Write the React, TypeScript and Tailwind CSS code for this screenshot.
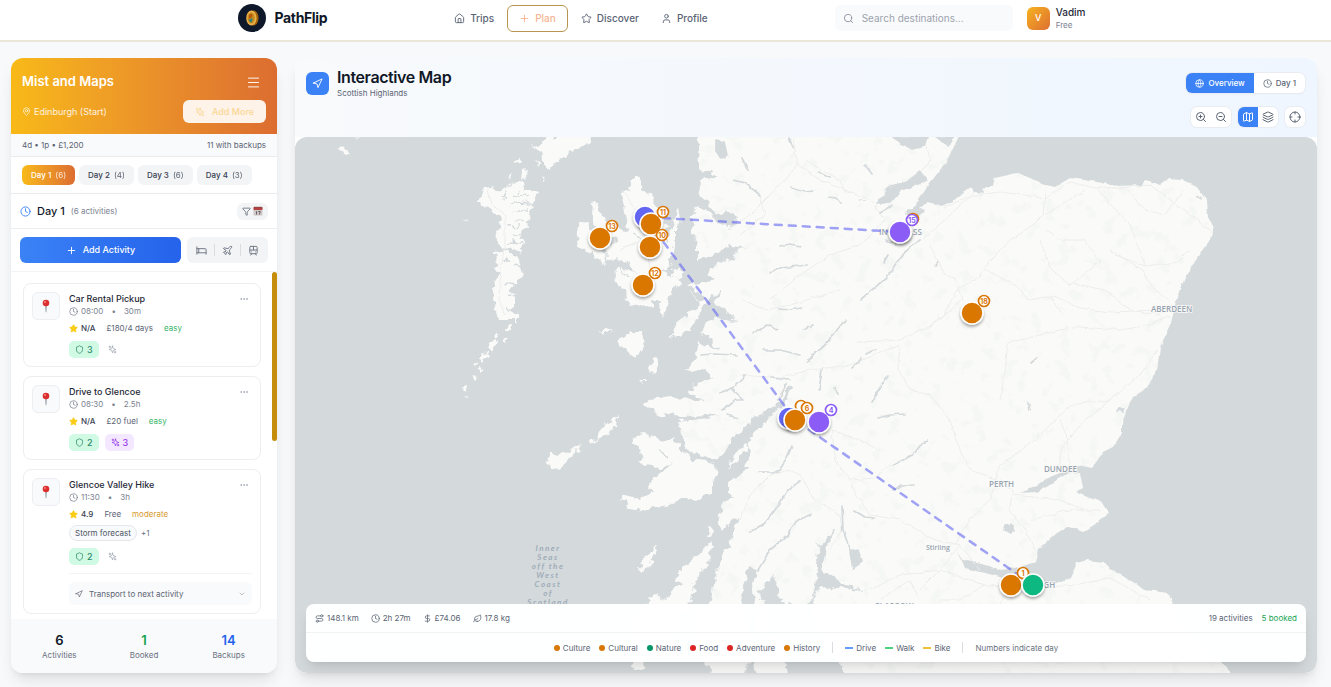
import type { ReactNode } from 'react'
import {
  House, Plus, Star, User, Search, Menu, MapPin, Clock, Bed, Plane, TramFront, Ellipsis,
  Shield, Navigation, ChevronDown, Globe, ZoomIn, ZoomOut, Map as MapIcon, Layers, Crosshair,
  Route, DollarSign, Leaf, Funnel,
} from 'lucide-react'

type Activity = {
  title: string
  time: string
  length: string
  rating: string
  price: string
  level: 'easy' | 'moderate'
  backups: number
  ideas?: number
  chip?: string
  transport?: boolean
}

const activities: Activity[] = [
  { title: 'Car Rental Pickup', time: '08:00', length: '30m', rating: 'N/A', price: '£180/4 days', level: 'easy', backups: 3 },
  { title: 'Drive to Glencoe', time: '08:30', length: '2.5h', rating: 'N/A', price: '£20 fuel', level: 'easy', backups: 2, ideas: 3 },
  { title: 'Glencoe Valley Hike', time: '11:30', length: '3h', rating: '4.9', price: 'Free', level: 'moderate', backups: 2, chip: 'Storm forecast', transport: true },
]

const days = [
  { name: 'Day 1', count: 6 },
  { name: 'Day 2', count: 4 },
  { name: 'Day 3', count: 6 },
  { name: 'Day 4', count: 3 },
]

const categories = [
  { name: 'Culture', color: 'bg-[#d97706]' },
  { name: 'Cultural', color: 'bg-[#d97706]' },
  { name: 'Nature', color: 'bg-[#059669]' },
  { name: 'Food', color: 'bg-[#dc2626]' },
  { name: 'Adventure', color: 'bg-[#dc2626]' },
  { name: 'History', color: 'bg-[#d97706]' },
]

const modes = [
  { name: 'Drive', color: 'bg-[#3b82f6]/80' },
  { name: 'Walk', color: 'bg-[#22c55e]/80' },
  { name: 'Bike', color: 'bg-[#eab308]/80' },
]

function Sparkles({ size, className }: { size: number; className?: string }) {
  return (
    <svg width={size} height={size} viewBox="0 0 24 24" fill="none" stroke="currentColor" strokeWidth="2" strokeLinecap="round" strokeLinejoin="round" className={className}>
      <path d="m12 3-1.912 5.813a2 2 0 0 1-1.275 1.275L3 12l5.813 1.912a2 2 0 0 1 1.275 1.275L12 21l1.912-5.813a2 2 0 0 1 1.275-1.275L21 12l-5.813-1.912a2 2 0 0 1-1.275-1.275L12 3Z" />
      <path d="M5 3v4M19 17v4M3 5h4M17 19h4" />
    </svg>
  )
}

function Logo() {
  return (
    <svg width="28" height="28" viewBox="0 0 28 28">
      <circle cx="14" cy="14" r="14" fill="#0f172a" />
      <ellipse cx="15.6" cy="14" rx="5" ry="7.4" fill="#a16207" />
      <ellipse cx="13.4" cy="14" rx="5.2" ry="7.6" fill="#eab04a" />
      <ellipse cx="13.2" cy="14" rx="3.6" ry="5.6" fill="#c98a1d" />
      <path d="M11 11.5c.8-1.6 2.6-2 3.6-1l-1.2 3.3-2.2.8z" fill="#b45309" />
      <path d="M10.6 15.2c1.4.6 2.8 0 3.4-1.6.8 1.4.6 3.6-.6 4.8-1.4-.2-2.5-1.400-2.800-3.200z" fill="#2f7f79" />
    </svg>
  )
}

function Pin() {
  return (
    <svg width="10" height="14" viewBox="0 0 10 14">
      <path d="M4.300 6h1.400l-.4 7.200h-.6z" fill="#7b8794" />
      <circle cx="5" cy="4" r="3.300" fill="#dc2f2f" />
      <circle cx="4" cy="3" r="1" fill="#f58a80" />
    </svg>
  )
}

function CalendarGlyph() {
  return (
    <svg width="10" height="10" viewBox="0 0 20 20">
      <rect x="1" y="2" width="18" height="17" rx="1.500" fill="#cfc6c6" />
      <rect x="1" y="2" width="18" height="6" rx="1.500" fill="#b4433f" />
      <path d="M4 1v3M8 1v3M12 1v3M16 1v3" stroke="#6b4a4a" strokeWidth="1.500" />
      <path d="M7 10.500v6.500M10.500 11h4l-2 6" stroke="#5b5560" strokeWidth="1.800" fill="none" />
    </svg>
  )
}

function Header() {
  return (
    <header className="border-b-2 border-[#ece6d8] bg-white">
      <div className="mx-auto flex h-10 max-w-[856px] items-center justify-between pb-1">
        <a href="#" className="flex items-center gap-[9px] text-sm font-bold tracking-tight text-[#101828]">
          <Logo />
          PathFlip
        </a>
        <nav className="flex items-center gap-1 text-[10px] font-medium text-[#5b6474]">
          <a href="#" className="flex h-[27px] items-center gap-[5px] px-[9px]"><House size={11} />Trips</a>
          <a href="#" className="flex h-[27px] items-center gap-[5px] rounded-md border border-[#b8954f] px-[11px] text-[#f6b592]"><Plus size={11} />Plan</a>
          <a href="#" className="flex h-[27px] items-center gap-[5px] px-[9px]"><Star size={11} />Discover</a>
          <a href="#" className="flex h-[27px] items-center gap-[5px] px-[9px]"><User size={11} />Profile</a>
        </nav>
        <div className="flex items-center gap-[14px]">
          <label className="flex h-[26px] w-[178px] items-center gap-2 rounded-md bg-[#f9fafb] px-2 text-[#8b93a1]">
            <Search size={11} className="shrink-0" />
            <input
              type="search"
              aria-label="Search destinations"
              placeholder="Search destinations..."
              className="w-full bg-transparent text-[10px] outline-none placeholder:text-[#9ca3af]"
            />
          </label>
          <button className="flex items-center gap-[6px] pr-2 text-left">
            <span className="flex size-[23px] items-center justify-center rounded-md bg-gradient-to-br from-[#f6b21b] to-[#dd6e2f] text-[9px] font-medium text-white">V</span>
            <span className="flex flex-col">
              <span className="text-[10px] leading-[13px] font-medium text-[#1f2937]">Vadim</span>
              <span className="text-[8px] leading-3 text-[#7b8290]">Free</span>
            </span>
          </button>
        </div>
      </div>
    </header>
  )
}

function ActivityCard({ item }: { item: Activity }) {
  return (
    <article className="flex gap-[9px] rounded-lg border border-[#eceef1] bg-white p-2">
      <div className="flex size-7 shrink-0 items-center justify-center rounded-md border border-[#eceef1] bg-[#f9fafb]">
        <Pin />
      </div>
      <div className="min-w-0 flex-1">
        <div className="flex h-[13px] items-center justify-between">
          <h3 className="text-[9px] font-medium text-[#1f2937]">{item.title}</h3>
          <button aria-label={`More options for ${item.title}`} className="mr-[3px] text-[#9ca3af]"><Ellipsis size={10} /></button>
        </div>
        <p className="flex h-3 items-center text-[8px] text-[#7b8290]">
          <Clock size={9} className="mr-[3px]" />
          {item.time}
          <span className="mx-2">•</span>
          {item.length}
        </p>
        <p className="mt-[5px] flex h-3 items-center gap-[11px] text-[8px] text-[#5b6474]">
          <span className="flex items-center gap-[3px] font-medium text-[#374151]">
            <Star size={9} className="fill-[#facc15] text-[#facc15]" />
            {item.rating}
          </span>
          <span>{item.price}</span>
          <span className={item.level === 'easy' ? 'text-[#38b566]' : 'text-[#d69a2d]'}>{item.level}</span>
        </p>
        {item.chip && (
          <p className="mt-1 flex h-[17px] items-center gap-1 text-[8px] text-[#6b7280]">
            <span className="rounded-full border border-[#e5e7eb] bg-[#f9fafb] px-[5px] leading-[14px] text-[#4b5563]">{item.chip}</span>
            +1
          </p>
        )}
        <div className="mt-[7px] flex items-center gap-[6px] text-[9px] font-medium">
          <button aria-label="Backup plans" className="flex h-[17px] items-center gap-[3px] rounded-[5px] bg-[#d1fae5] px-[6px] text-[#2d8a6a]">
            <Shield size={9} />{item.backups}
          </button>
          <button
            aria-label="Suggestions"
            className={`flex h-[17px] items-center gap-[3px] rounded-[5px] ${item.ideas ? 'bg-[#f3e8ff] px-[6px] text-[#9333ea]' : 'px-[3px] text-[#9ca3af]'}`}
          >
            <Sparkles size={9} />{item.ideas}
          </button>
        </div>
        {item.transport && (
          <div className="mt-2 border-t border-[#f3f4f6] pt-2">
            <button className="flex h-[23px] w-full items-center gap-[6px] rounded-md bg-[#f9fafb] px-[6px] text-[8px] text-[#5b6474]">
              <Navigation size={8} />
              Transport to next activity
              <ChevronDown size={8} className="ml-auto text-[#9ca3af]" />
            </button>
          </div>
        )}
      </div>
    </article>
  )
}

function Total({ value, label, color }: { value: number; label: string; color: string }) {
  return (
    <div className="flex flex-col items-center">
      <span className={`text-[13px] leading-[18px] font-semibold ${color}`}>{value}</span>
      <span className="text-[8px] leading-3 text-[#6b7280]">{label}</span>
    </div>
  )
}

function Sidebar() {
  return (
    <aside className="flex w-[266px] shrink-0 flex-col overflow-hidden rounded-xl bg-white shadow-lg">
      <div className="bg-gradient-to-r from-[#f8b917] to-[#dc6d30] px-[11px] pt-[14px] pb-[11px] text-white">
        <div className="flex h-5 items-center justify-between pr-[5px]">
          <h1 className="text-[13px] font-semibold">Mist and Maps</h1>
          <button aria-label="Trip menu"><Menu size={15} strokeWidth={1.5} /></button>
        </div>
        <div className="mt-2 flex h-[23px] items-center justify-between">
          <p className="flex items-center gap-[3px] text-[9px] text-white/85"><MapPin size={9} />Edinburgh (Start)</p>
          <button className="flex h-[23px] items-center gap-[7px] rounded-md bg-[#fdf3e9] px-3 text-[9px] font-medium text-[#fbd794]">
            <Sparkles size={10} />Add More
          </button>
        </div>
      </div>

      <div className="flex h-[23px] items-center justify-between border-b border-[#e9ebee] bg-[#f9fafb] px-[11px] text-[8px] text-[#5b6474]">
        <span>4d • 1p • £1,200</span>
        <span>11 with backups</span>
      </div>

      <div className="flex h-[37px] items-center gap-1 border-b border-[#e9ebee] px-[11px]">
        {days.map((day, i) => (
          <button
            key={day.name}
            className={`flex h-5 items-center gap-1 rounded-md px-[9px] text-[8px] font-medium ${i === 0 ? 'bg-gradient-to-r from-[#f8b917] to-[#dc6d30] text-white' : 'bg-[#f3f4f6] text-[#374151]'}`}
          >
            {day.name} <span className="font-normal opacity-80">({day.count})</span>
          </button>
        ))}
      </div>

      <div className="flex h-[35px] items-center gap-[6px] rounded-t-lg border-b border-[#eceef1] px-[9px]">
        <Clock size={11} className="text-[#3b82f6]" />
        <h2 className="text-[11px] font-medium text-[#111827]">Day 1</h2>
        <span className="text-[8px] text-[#7b8290]">(6 activities)</span>
        <button aria-label="Filter by date" className="ml-auto flex h-[17px] items-center gap-[2px] rounded-md bg-[#f3f4f6] px-[5px] text-[#5b6474]">
          <Funnel size={9} /><CalendarGlyph />
        </button>
      </div>

      <div className="flex h-[43px] items-center gap-[6px] border-b border-[#f3f4f6] px-[9px]">
        <button className="flex h-[26px] flex-1 items-center justify-center gap-[6px] rounded-md bg-gradient-to-r from-[#3b82f6] to-[#2563eb] text-[9px] font-medium text-white">
          <Plus size={11} />Add Activity
        </button>
        <div className="flex h-[26px] items-center gap-[7px] rounded-md bg-[#f3f4f6] px-[9px] text-[#6b7280]">
          <button aria-label="Add stay"><Bed size={11} /></button>
          <span className="h-3 w-px bg-[#d9dce1]" />
          <button aria-label="Add flight"><Plane size={11} /></button>
          <span className="h-3 w-px bg-[#d9dce1]" />
          <button aria-label="Add transit"><TramFront size={11} /></button>
        </div>
      </div>

      <div className="flex flex-1">
        <div className="flex flex-1 flex-col gap-[9px] pt-[11px] pb-1 pr-[11px] pl-[12px]">
          {activities.map(item => <ActivityCard key={item.title} item={item} />)}
        </div>
        <div className="h-[169px] w-[5px] rounded-full bg-[#c68d0c]" />
      </div>

      <footer className="grid h-[54px] grid-cols-3 items-center bg-[#f8fafc] px-[6px]">
        <Total value={6} label="Activities" color="text-[#111827]" />
        <Total value={1} label="Booked" color="text-[#16a34a]" />
        <Total value={14} label="Backups" color="text-[#2563eb]" />
      </footer>
    </aside>
  )
}

/* Land masses, drawn in the map's own 1022x536 window (origin 295,137). */
const mainland =
  'M698 130 698 145 699 169 707 171 713 172 716 178 703 178 698 192 707 200 710 208 720 215 727 212 737 216 735 223 727 228 719 225 713 217 705 211 697 207 693 215 692 230 697 245 697 262 707 258 723 250 728 245 743 246 733 258 717 263 708 275 716 280 703 281 687 285 696 291 705 297 700 304 690 312 677 322 671 336 676 338 688 330 697 318 703 308 710 298 718 292 722 287 715 303 723 309 730 314 737 322 724 320 715 317 706 323 702 332 710 337 713 345 720 349 709 348 697 342 696 357 685 370 693 372 703 368 713 377 703 383 693 385 690 393 703 400 694 402 686 396 679 399 671 395 662 399 655 396 645 404 652 411 660 416 670 413 680 418 694 415 705 414 720 416 700 419 678 422 681 433 687 452 701 455 715 460 725 452 733 437 745 427 757 415 767 412 776 405 783 397 790 385 793 387 787 400 770 417 760 428 753 435 748 443 752 453 747 460 748 468 738 477 728 483 728 493 735 497 722 503 720 523 723 532 733 520 738 516 728 547 720 562 715 577 713 593 712 600 700 607 690 630 700 650 712 680 742 680 755 650 745 620 741 600 746 575 747 565 757 570 753 590 754 604 760 640 770 620 764 602 757 593 778 570 780 555 775 580 783 603 800 610 812 600 817 575 815 560 820 548 832 532 826 550 822 570 832 575 840 582 865 590 840 588 818 586 812 605 820 640 838 660 848 680 1234 680 1228 668 1200 645 1180 620 1173 603 1167 593 1155 591 1143 590 1133 582 1117 573 1103 562 1087 560 1077 563 1070 578 1053 584 1035 582 1000 577 985 573 965 568 962 561 957 551 963 560 978 563 1002 570 1020 567 1035 562 1038 550 1057 533 1067 527 1075 528 1082 532 1095 525 1109 512 1103 503 1082 495 1075 492 1083 488 1080 473 1065 475 1050 484 1037 492 1020 493 1035 487 1045 479 1060 473 1078 465 1092 468 1103 452 1113 447 1122 433 1122 423 1128 407 1133 397 1147 388 1157 370 1160 348 1170 327 1177 297 1187 273 1200 253 1210 240 1213 227 1208 217 1207 200 1195 185 1183 180 1168 179 1160 185 1147 180 1142 185 1118 186 1097 182 1070 178 1055 187 1042 184 1030 178 1017 173 995 178 993 185 983 188 967 189 952 202 942 206 926 203 918 210 910 214 916 203 924 192 930 183 940 170 950 155 958 138 962 130Z'

const islands = [
  // Harris
  'M532 145 538 146 548 137 600 130 583 147 576 149 573 154 567 150 566 157 558 158 550 170 545 163 540 154Z',
  // North Uist and Benbecula
  'M485 188 493 187 500 192 507 186 513 184 520 180 527 185 523 190 537 190 540 192 535 200 531 208 530 216 527 221 528 228 520 233 524 240 520 252 510 248 503 247 497 243 496 232 502 227 499 216 490 210 478 202Z',
  // South Uist
  'M495 252 507 250 516 257 520 264 522 277 516 284 511 291 515 297 515 307 509 311 518 315 518 320 500 320 495 310 493 287 498 270Z',
  // Barra and its neighbours
  'M508 324 512 323 511 331 507 331Z M490 341 497 338 498 345 493 351 488 349Z M480 352 486 353 489 358 482 363Z M465 385 468 384 467 390 463 391Z M497 331 500 334 495 336Z M475 361 478 362 477 366Z',
  'M513 160 520 157 521 162 515 164Z M522 172 528 170 527 177 521 179Z M536 160 539 163 537 170Z M339 147 347 148 350 155 343 153Z M462 221 469 219 470 222Z',
  'M504 338 508 337 506 342Z M480 368 483 370 480 373Z M463 394 468 395 465 397Z M509 177 513 175 512 181Z M543 176 546 178 543 181Z M472 376 477 377 474 380Z M356 136 359 138 357 140Z',
  // Skye
  'M632 178 638 178 642 188 650 193 655 205 660 216 668 226 664 232 668 242 666 252 672 266 662 270 668 275 678 280 681 285 673 288 668 303 662 319 659 310 660 300 652 300 654 308 640 304 629 306 625 291 616 284 614 270 624 268 634 272 640 280 628 262 610 258 611 246 616 240 610 236 612 258 604 264 596 258 586 250 576 242 578 226 584 222 592 233 597 230 592 216 593 202 600 210 606 222 618 230 628 231 624 206 621 193 630 188Z',
  // Raasay and Scalpay
  'M678 208 681 214 678 226 673 232 673 245 669 262 664 250 668 240Z M672 270 680 268 685 275 678 280 672 276Z',
  // Rum, Canna, Eigg, Muck
  'M617 342 625 335 634 331 644 336 643 350 635 358 628 352Z M598 331 606 328 614 331 604 334Z M651 363 658 357 660 367 654 374 648 370Z M640 381 647 381 643 384Z',
  // Coll and Tiree
  'M617 416 616 424 609 433 601 439 595 438 600 430 607 423Z M583 447 575 452 569 460 562 466 553 469 549 464 550 454 560 455 569 450 579 446Z M591 440 598 439 590 445Z',
  // Mull
  'M634 438 643 434 655 438 668 442 674 437 682 451 690 459 703 461 716 465 718 476 712 480 712 492 695 503 690 500 693 495 680 500 664 506 646 510 636 512 625 507 627 499 620 501 623 495 640 498 655 492 648 489 650 482 660 473 673 463 660 467 637 464 645 458 632 443Z',
  // Lismore and the small slate islands
  'M745 445 749 447 739 459 727 467 732 457Z M722 506 725 510 721 530 718 525Z M710 528 714 530 711 538 707 536Z',
  // Jura and Islay
  'M711 542 714 545 708 562 697 578 685 584 675 580 680 570 695 556Z M657 545 655 556 646 570 641 572 642 560Z M663 600 678 586 695 580 692 600 680 618 675 640 665 655 645 660 632 668 635 645 628 640 635 620 645 605 655 593Z M632 660 645 662 643 670 634 670Z',
  // Arran
  'M753 662 762 640 775 635 785 655 786 668 789 680 757 680Z',
]

// Sea lochs and inlets cut into the Uists and Skye
const inlets =
  'M528 196 520 197 514 195M530 204 516 203 510 205M528 211 518 212 512 210M540 200 533 205 525 201M525 218 515 220M520 227 509 228M527 234 513 235M510 242 522 243M504 191 507 197 502 199M520 188 518 193M520 256 511 254M522 268 514 266M517 285 506 284M515 296 508 295M517 310 505 309M505 257 509 262M605 250 607 262M640 240 634 232M618 268 630 276'

const lochs = [
  'M920 240 905 252 887 277 860 300M845 320 825 345 807 361M787 384 778 400',
  'M721 146 725 158M742 158 748 170M733 180 745 183 760 195M792 188 805 192 813 191M789 138 793 147M818 172 830 178M828 197 836 198 840 203',
  'M780 246 790 244 801 246M770 272 780 268 807 265M779 309 790 310 801 308M752 334 767 325 778 329M803 329 813 325M763 350 780 350 800 355M770 378 790 380M700 355 715 354 737 355M745 376 735 386 720 393',
  'M730 388 743 400 735 400 722 410M838 394 834 388M822 370 819 390M883 382 877 395 872 402M878 418 890 415 904 414M893 465 905 459 914 454 922 443 928 441M894 489 903 486 914 485',
  'M792 446 786 460 778 472 760 472M800 481 788 490 775 510 765 523 750 532M812 514 797 520 788 535 770 550 758 570M842 506 843 530 850 550 855 560M835 530 822 548 816 543M855 511 865 517 874 518M738 418 728 415M668 458 660 450M900 485 893 490',
  'M860 200 865 201M865 165 872 174M880 204 890 186 905 183 922 180M892 206 880 213M886 240 896 244M895 235 902 234M888 255 884 262M867 354 875 350M1011 525 1014 531M1031 363 1037 358M888 376 875 395M852 368 862 358M1122 409 1117 411M1028 402 1030 409M1196 196 1202 199M935 265 938 262',
]

const roads = [
  'M945 207 970 196 1000 192 1045 198 1070 182 1095 188 1118 188 1150 185 1190 215 1212 232',
  'M922 240 950 215 975 192M930 245 945 275 955 278 962 300 940 320 900 340 857 342',
  'M1045 190 1043 215 1033 225 1010 240 995 255 980 275 955 292 945 315 925 330',
  'M1045 215 1085 190M1045 228 1060 240 1085 240 1100 262 1070 285 1050 268 1040 240M1110 250 1140 268 1155 290 1170 300M1098 190 1120 215 1130 225 1145 265',
  'M1183 190 1165 215 1145 210 1125 188M1190 250 1178 262 1145 266 1115 255M1073 283 1105 290 1130 310 1160 315M1052 295 1080 308 1110 312 1160 310 1172 305',
  'M985 270 1015 285 1030 300 1050 296 1060 312M1170 315 1150 325 1120 330 1080 327 1060 330 1008 343 1005 370 1000 400',
  'M1158 350 1140 375 1110 400 1070 405 1035 440 1000 465 990 500 970 520 955 545M1110 400 1080 425 1060 450 1060 470M1060 420 1068 440 1070 465',
  'M950 420 958 445 970 470 1000 480 1012 490 1010 510 1025 530 1035 550M1012 495 1060 500 1085 510M1030 520 1070 510 1100 510',
  'M900 345 898 370 910 390 930 395 950 420M832 430 835 460 850 480 875 478 890 465M832 430 860 440 880 450',
  'M800 475 790 470 770 475 750 495 740 520M800 475 815 500 840 515 842 530 830 550M850 485 870 515 900 520 935 540 960 545 980 570',
  'M870 590 900 575 940 570 985 585 1035 588 1075 585 1110 578 1150 600M880 600 910 580 920 600M960 545 940 570 920 590M985 585 960 600 940 600M1010 588 1000 604',
  'M793 138 798 165 820 180 845 190 870 200 885 220 860 245 830 255 800 275 770 300M798 165 770 195 750 215 730 228M760 195 765 215 740 235',
  'M805 160 840 180 845 192M743 300 765 310 790 305 840 290M700 305 690 290M810 370 850 365 900 345M740 375 780 378 810 370',
  'M925 138 930 160 915 180 885 190 875 210M622 190 640 215 645 240 650 268M640 240 620 250',
  'M488 190 492 205 505 215 505 240 501 270 499 300 505 315',
]

type Marker = { x: number; y: number; color: string; label?: string }

const markers: Marker[] = [
  { x: 645, y: 217, color: '#6366f1' },
  { x: 651, y: 224, color: '#d97706', label: '11' },
  { x: 650, y: 247, color: '#d97706', label: '10' },
  { x: 600, y: 238, color: '#d97706', label: '13' },
  { x: 643, y: 285, color: '#d97706', label: '12' },
  { x: 901, y: 231, color: '#d97706', label: '' },
  { x: 900, y: 232, color: '#8b5cf6', label: '15' },
  { x: 972, y: 313, color: '#d97706', label: '18' },
  { x: 789, y: 418, color: '#6366f1', label: '' },
  { x: 795, y: 420, color: '#d97706', label: '6' },
  { x: 819, y: 422, color: '#8b5cf6', label: '4' },
  { x: 1011, y: 585, color: '#d97706', label: '1' },
  { x: 1033, y: 585, color: '#10b981' },
]

function MapCanvas() {
  return (
    <svg className="absolute inset-0 h-full w-full" viewBox="295 137 1022 536" preserveAspectRatio="xMidYMid slice" role="img" aria-label="Map of the Scottish Highlands">
      <defs>
        <filter id="coast" x="295" y="137" width="1022" height="536" filterUnits="userSpaceOnUse">
          <feTurbulence type="fractalNoise" baseFrequency="0.140" numOctaves="2" seed="4" />
          <feDisplacementMap in="SourceGraphic" scale="10" xChannelSelector="R" yChannelSelector="G" />
        </filter>
        <filter id="east" x="295" y="137" width="1022" height="536" filterUnits="userSpaceOnUse">
          <feTurbulence type="fractalNoise" baseFrequency="0.120" numOctaves="2" seed="9" />
          <feDisplacementMap in="SourceGraphic" scale="4" xChannelSelector="R" yChannelSelector="G" />
        </filter>
        <filter id="woods" x="295" y="137" width="1022" height="536" filterUnits="userSpaceOnUse" colorInterpolationFilters="sRGB">
          <feTurbulence type="fractalNoise" baseFrequency="0.070" numOctaves="4" seed="21" />
          <feColorMatrix values="0 0 0 0 0.960  0 0 0 0 0.969  0 0 0 0 0.961  8 0 0 0 -4.700" />
        </filter>
        <filter id="pin" x="-50%" y="-50%" width="200%" height="200%">
          <feDropShadow dx="0" dy="2" stdDeviation="1.500" floodOpacity="0.350" />
        </filter>
        <clipPath id="land">
          <path d={mainland} />
        </clipPath>
        <clipPath id="westHalf">
          <rect x="295" y="137" width="585" height="536" />
        </clipPath>
        <clipPath id="eastHalf">
          <rect x="879" y="137" width="438" height="536" />
        </clipPath>
      </defs>
      <rect x="295" y="137" width="1022" height="536" fill="#d4d9dc" />
      <g fill="#fafaf8">
        <g clipPath="url(#westHalf)">
          <path d={mainland} filter="url(#coast)" />
        </g>
        <g clipPath="url(#eastHalf)">
          <path d={mainland} filter="url(#east)" />
        </g>
        <g filter="url(#coast)">
          {islands.map(d => <path key={d} d={d} />)}
          <path d={inlets} fill="none" stroke="#d4d9dc" strokeWidth="1.300" />
        </g>
      </g>
      <g clipPath="url(#land)">
        <rect x="740" y="137" width="480" height="536" filter="url(#woods)" />
      </g>
      <g fill="none" stroke="#ededed" strokeWidth="1" strokeLinejoin="round" filter="url(#east)">
        {roads.map(d => <path key={d} d={d} />)}
      </g>
      <g fill="none" stroke="#d4d9dc" strokeWidth="1.700" strokeLinecap="round" strokeLinejoin="round" filter="url(#east)">
        {lochs.map(d => <path key={d} d={d} />)}
        <path d="M877 204 890 188 907 182 920 172 928 180 913 186 900 190 890 202Z" fill="#d4d9dc" />
        <path d="M900 142 912 149 925 146 928 137 893 137Z M935 137 948 145 954 137Z" fill="#d4d9dc" />
        <path d="M850 552 858 550 862 562 853 568Z M1006 524 1013 528 1011 533 1005 530Z M1118 409 1124 409 1122 413Z" fill="#d4d9dc" />
        <path d="M970 187 980 185 983 192 974 191Z M908 210 924 210 918 216 907 214Z" fill="#d4d9dc" />
        <path d="M716 140 724 142 727 155 722 158 716 152Z" fill="#d4d9dc" />
      </g>

      <g fontFamily="'Open Sans', sans-serif" fontWeight="600" fill="#98a5b1" stroke="#fafaf8" strokeWidth="1.500" paintOrder="stroke" fontSize="8">
        <text x="1151" y="312">ABERDEEN</text>
        <text x="1044" y="472">DUNDEE</text>
        <text x="989" y="487">PERTH</text>
        <text x="879" y="235">INVERNESS</text>
        <text x="1008" y="588">EDINBURGH</text>
        <text x="926" y="550" fontSize="7">Stirling</text>
        <text x="874" y="609">GLASGOW</text>
      </g>
      <g fontFamily="Lato, sans-serif" fontStyle="italic" fontWeight="700" fontSize="8" letterSpacing="1.500" fill="#a0adb8" textAnchor="middle">
        {['Inner', 'Seas', 'off the', 'West', 'Coast', 'of', 'Scotland'].map((line, i) => (
          <text key={line} x="548" y={551 + i * 9}>{line}</text>
        ))}
      </g>

      <path
        d="M1033 585 795 420 645 217 900 232"
        fill="none"
        stroke="#6366f1"
        strokeOpacity="0.600"
        strokeWidth="2.500"
        strokeDasharray="7 7"
        strokeLinecap="round"
      />

      {markers.map(m => (
        <g key={`${m.x}-${m.y}`} fontFamily="Inter, sans-serif">
          <circle cx={m.x} cy={m.y} r="11" fill={m.color} stroke="#fff" strokeWidth="1.500" filter="url(#pin)" />
          {m.label !== undefined && (
            <>
              <circle cx={m.x + 12} cy={m.y - 12} r="5.500" fill="#fff" stroke={m.color === '#6366f1' ? '#d97706' : m.color} strokeWidth="1.700" />
              <text x={m.x + 12} y={m.y - 9.500} fontSize="7" fontWeight="700" textAnchor="middle" fill={m.color}>{m.label}</text>
            </>
          )}
        </g>
      ))}
    </svg>
  )
}

function Stat({ icon, children }: { icon: ReactNode; children: ReactNode }) {
  return <span className="flex items-center gap-[3px]">{icon}{children}</span>
}

function MapPanel() {
  return (
    <section className="flex min-w-0 flex-1 flex-col overflow-hidden rounded-xl bg-white shadow-lg">
      <div className="flex h-[79px] items-start justify-between bg-gradient-to-r from-[#f8fafc] to-[#eff6ff] pr-3 pl-[11px]">
        <div className="flex gap-2 pt-[10px]">
          <span className="mt-1 flex size-[23px] items-center justify-center rounded-md bg-[#3b82f6] text-white"><Navigation size={11} /></span>
          <div>
            <h2 className="text-base leading-[19px] font-semibold tracking-tight text-[#111827]">Interactive Map</h2>
            <p className="text-[8px] leading-3 text-[#5b6474]">Scottish Highlands</p>
          </div>
        </div>
        <div className="flex flex-col items-end gap-[14px] pt-[15px] text-[8px] font-medium text-[#5b6474]">
          <div className="flex overflow-hidden rounded-md bg-white shadow-xs ring-1 ring-[#e9edf2]">
            <button className="flex h-5 items-center gap-1 bg-[#3b82f6] px-[9px] text-white"><Globe size={9} />Overview</button>
            <button className="flex h-5 items-center gap-1 px-[9px]"><Clock size={9} />Day 1</button>
          </div>
          <div className="flex gap-[7px]">
            <div className="flex overflow-hidden rounded-md bg-white ring-1 ring-[#e9edf2]">
              <button aria-label="Zoom in" className="flex size-5 items-center justify-center"><ZoomIn size={12} /></button>
              <button aria-label="Zoom out" className="flex size-5 items-center justify-center"><ZoomOut size={12} /></button>
            </div>
            <div className="flex overflow-hidden rounded-md bg-white ring-1 ring-[#e9edf2]">
              <button aria-label="Street map" className="flex size-5 items-center justify-center bg-[#3b82f6] text-white"><MapIcon size={12} /></button>
              <button aria-label="Layers" className="flex size-5 items-center justify-center"><Layers size={12} /></button>
            </div>
            <button aria-label="Centre the map" className="flex size-5 items-center justify-center rounded-md bg-white ring-1 ring-[#e9edf2]"><Crosshair size={12} /></button>
          </div>
        </div>
      </div>

      <div className="relative flex-1 overflow-hidden rounded-xl">
        <MapCanvas />
        <div className="absolute inset-x-[11px] bottom-[11px] rounded-lg bg-white/98 text-[8px] text-[#5b6474] shadow-lg">
          <div className="flex h-[29px] items-center gap-3 border-b border-[#f1f2f4] px-[9px]">
            <Stat icon={<Route size={9} />}>148.1 km</Stat>
            <Stat icon={<Clock size={9} />}>2h 27m</Stat>
            <Stat icon={<DollarSign size={9} />}>£74.06</Stat>
            <Stat icon={<Leaf size={9} />}>17.8 kg</Stat>
            <div className="ml-auto flex gap-[9px]">
              <span>19 activities</span>
              <span className="text-[#22a655]">5 booked</span>
            </div>
          </div>
          <div className="flex h-[29px] items-center justify-center gap-[9px]">
            {categories.map(c => (
              <span key={c.name} className="flex items-center gap-[3px]">
                <span className={`size-[6px] rounded-full ${c.color}`} />{c.name}
              </span>
            ))}
            <span className="mx-[3px] h-[11px] w-px bg-[#d9dce1]" />
            {modes.map(m => (
              <span key={m.name} className="flex items-center gap-[3px]">
                <span className={`h-[2px] w-2 ${m.color}`} />{m.name}
              </span>
            ))}
            <span className="mx-[3px] h-[11px] w-px bg-[#d9dce1]" />
            <span className="text-[#6b7280]">Numbers indicate day</span>
          </div>
        </div>
      </div>
    </section>
  )
}

export default function App() {
  return (
    <div className="flex min-h-screen flex-col bg-[#f8f9fb] font-[Inter,sans-serif]">
      <Header />
      <main className="flex flex-1 gap-[18px] pt-4 pr-[14px] pb-[14px] pl-[11px]">
        <Sidebar />
        <MapPanel />
      </main>
    </div>
  )
}
